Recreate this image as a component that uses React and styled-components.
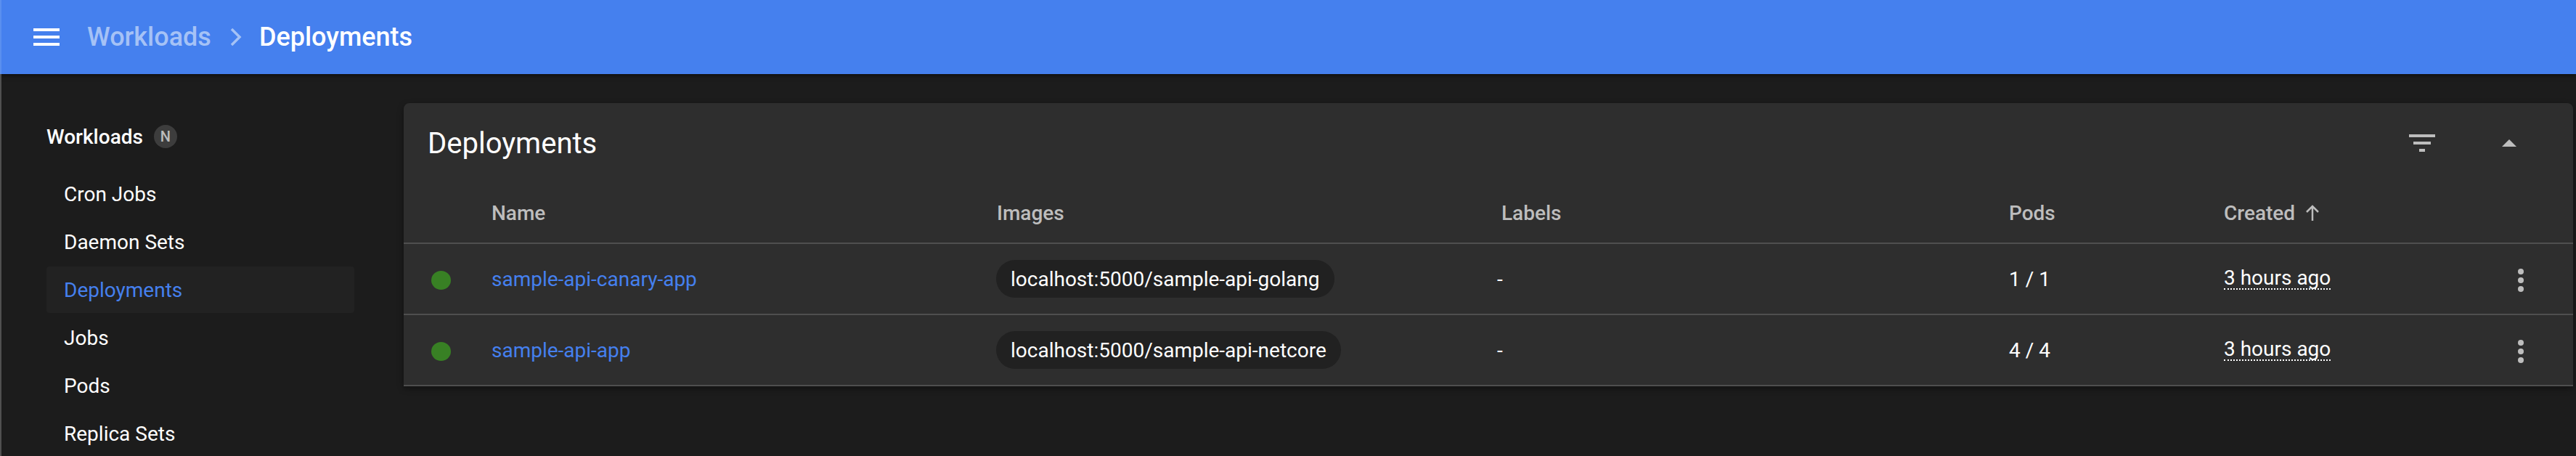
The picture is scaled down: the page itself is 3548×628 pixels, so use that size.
import React from "react";
import styled, { createGlobalStyle } from "styled-components";

const GlobalStyle = createGlobalStyle`
    html, body {
        margin: 0;
        padding: 0;
        background: #1c1c1c;
        font-family: Roboto, "Liberation Sans", sans-serif;
    }
`;

const Page = styled.div`
    width: 3548px;
    height: 628px;
    overflow: hidden;
    box-sizing: border-box;
    background: #1c1c1c;
    position: relative;
`;

const TopBar = styled.header`
    height: 102px;
    display: flex;
    align-items: center;
    background: #4580ee;
    border-left: 2px solid #5a8fef;
    box-sizing: border-box;
    box-shadow: 0 2px 6px rgba(0, 0, 0, 0.5);
    padding-left: 44px;
    color: #fff;
`;

const MenuIcon = styled.svg`
    width: 36px;
    height: 24px;
    display: block;
    margin-right: 38px;
`;

const Crumb = styled.span`
    font-size: 36px;
    font-weight: 500;
    color: ${(p) => (p.$muted ? "#a5c2f6" : "#ffffff")};
`;

const CrumbChevron = styled.svg`
    width: 16px;
    height: 24px;
    display: block;
    margin: 0 24px 0 26px;
`;

const Body = styled.div`
    display: flex;
    align-items: flex-start;
    border-left: 2px solid #505050;
    height: 526px;
`;

const Sidebar = styled.nav`
    width: 554px;
    flex-shrink: 0;
    box-sizing: border-box;
    padding: 54px 68px 0 62px;
`;

const SectionHead = styled.div`
    display: flex;
    align-items: center;
    height: 64px;
    color: #fff;
    font-size: 28px;
    font-weight: 500;
    margin-bottom: 15px;
`;

const Badge = styled.span`
    width: 32px;
    height: 32px;
    border-radius: 50%;
    background: #3d3d3d;
    color: #bdbdbd;
    font-size: 20px;
    font-weight: 500;
    display: flex;
    align-items: center;
    justify-content: center;
    margin-left: 15px;
`;

const NavItem = styled.div`
    height: 64px;
    margin-bottom: 2px;
    display: flex;
    align-items: center;
    padding-left: 24px;
    font-size: 28px;
    border-radius: 4px;
    color: ${(p) => (p.$active ? "#4580ee" : "#ffffff")};
    background: ${(p) => (p.$active ? "#222222" : "transparent")};
`;

const Card = styled.section`
    margin-top: 40px;
    width: 2988px;
    background: #2e2e2e;
    border-radius: 8px 8px 0 0;
    box-shadow: 0 3px 8px rgba(0, 0, 0, 0.4);
`;

const CardHead = styled.div`
    height: 110px;
    display: flex;
    align-items: center;
    padding-left: 33px;
`;

const CardTitle = styled.h2`
    margin: 0;
    flex: 1;
    font-size: 40px;
    font-weight: 400;
    color: #fff;
`;

const FilterIcon = styled.svg`
    width: 36px;
    height: 24px;
    display: block;
    margin-right: 92px;
`;

const CollapseIcon = styled.svg`
    width: 20px;
    height: 10px;
    display: block;
    margin-right: 78px;
`;

const TableRow = styled.div`
    display: grid;
    grid-template-columns: 121px 696px 695px 699px 296px 1fr;
    align-items: center;
    height: ${(p) => (p.$head ? "84px" : "98px")};
    box-sizing: border-box;
    border-bottom: 2px solid #4f4f4f;
`;

const HeadCell = styled.div`
    display: flex;
    align-items: center;
    font-size: 28px;
    font-weight: 500;
    color: #bdbdbd;
`;

const ArrowIcon = styled.svg`
    width: 20px;
    height: 22px;
    display: block;
    margin-left: 14px;
`;

const Cell = styled.div`
    display: flex;
    align-items: center;
    font-size: 28px;
    color: #fff;
`;

const StatusCell = styled.div`
    display: flex;
    padding: 4px 0 0 38px;
`;

const StatusDot = styled.span`
    width: 27px;
    height: 26px;
    border-radius: 50%;
    background: #388024;
`;

const NameLink = styled.a`
    font-size: 28px;
    color: #4580ee;
    text-decoration: none;
`;

const Chip = styled.span`
    height: 52px;
    display: inline-flex;
    align-items: center;
    padding: 0 20px;
    border-radius: 26px;
    background: #212121;
    color: #fff;
    font-size: 28px;
    margin-left: -1px;
`;

const Dash = styled.span`
    margin-left: -6px;
`;

const Age = styled.span`
    border-bottom: 2px dotted #fff;
    line-height: 28px;
`;

const ActionCell = styled.div`
    display: flex;
    align-items: center;
    justify-content: space-between;
    padding-right: 68px;
    font-size: 28px;
    color: #fff;
`;

const Kebab = styled.svg`
    width: 8px;
    height: 32px;
    display: block;
    margin-top: 4px;
`;

const NAV = ["Cron Jobs", "Daemon Sets", "Deployments", "Jobs", "Pods", "Replica Sets"];

const ROWS = [
    { name: "sample-api-canary-app", image: "localhost:5000/sample-api-golang", pods: "1 / 1" },
    { name: "sample-api-app", image: "localhost:5000/sample-api-netcore", pods: "4 / 4" },
];

function App() {
    return (
        <Page>
            <GlobalStyle />
            <TopBar>
                <MenuIcon viewBox="0 0 36 24">
                    <path d="M0 0h36v4H0zM0 10h36v4H0zM0 20h36v4H0z" fill="#fff" />
                </MenuIcon>
                <Crumb $muted>Workloads</Crumb>
                <CrumbChevron viewBox="0 0 16 24">
                    <path d="M2 1l11 11L2 23" fill="none" stroke="#a5c2f6" strokeWidth="3.5" />
                </CrumbChevron>
                <Crumb>Deployments</Crumb>
            </TopBar>
            <Body>
                <Sidebar>
                    <SectionHead>
                        Workloads
                        <Badge>N</Badge>
                    </SectionHead>
                    {NAV.map((item) => (
                        <NavItem key={item} $active={item === "Deployments"}>
                            {item}
                        </NavItem>
                    ))}
                </Sidebar>
                <Card>
                    <CardHead>
                        <CardTitle>Deployments</CardTitle>
                        <FilterIcon viewBox="0 0 36 24">
                            <path d="M0 0h36v4H0zM6 10h24v4H6zM14 20h8v4h-8z" fill="#bdbdbd" />
                        </FilterIcon>
                        <CollapseIcon viewBox="0 0 20 10">
                            <path d="M10 0l10 10H0z" fill="#bdbdbd" />
                        </CollapseIcon>
                    </CardHead>
                    <TableRow $head>
                        <span />
                        <HeadCell>Name</HeadCell>
                        <HeadCell>Images</HeadCell>
                        <HeadCell>Labels</HeadCell>
                        <HeadCell>Pods</HeadCell>
                        <HeadCell>
                            Created
                            <ArrowIcon viewBox="0 0 20 22">
                                <path d="M10 22V3M2 10l8-8 8 8" fill="none" stroke="#bdbdbd" strokeWidth="2.500" />
                            </ArrowIcon>
                        </HeadCell>
                    </TableRow>
                    {ROWS.map((row) => (
                        <TableRow key={row.name}>
                            <StatusCell>
                                <StatusDot />
                            </StatusCell>
                            <NameLink>{row.name}</NameLink>
                            <Cell>
                                <Chip>{row.image}</Chip>
                            </Cell>
                            <Cell>
                                <Dash>-</Dash>
                            </Cell>
                            <Cell>{row.pods}</Cell>
                            <ActionCell>
                                <Age>3 hours ago</Age>
                                <Kebab viewBox="0 0 8 32">
                                    <circle cx="4" cy="4" r="4" fill="#bdbdbd" />
                                    <circle cx="4" cy="16" r="4" fill="#bdbdbd" />
                                    <circle cx="4" cy="28" r="4" fill="#bdbdbd" />
                                </Kebab>
                            </ActionCell>
                        </TableRow>
                    ))}
                </Card>
            </Body>
        </Page>
    );
}

export default App;
